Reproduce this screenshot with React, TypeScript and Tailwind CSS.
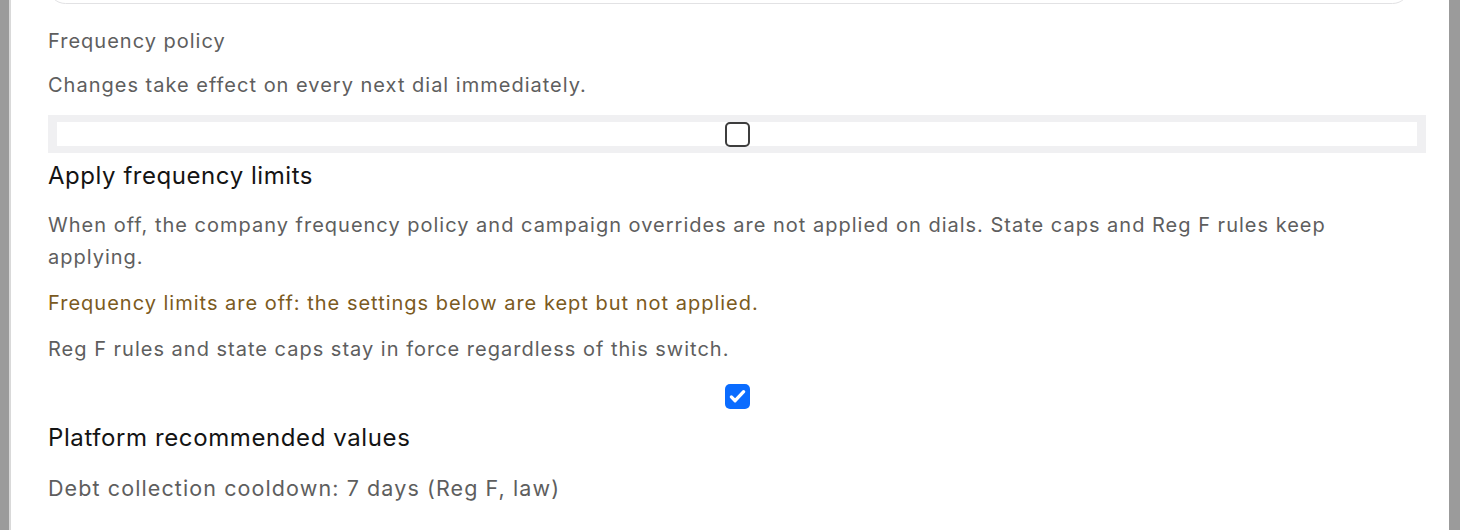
import React from 'react';

const Checkbox: React.FC<{ checked?: boolean }> = ({ checked }) =>
  checked ? (
    <span className="flex h-[25px] w-[25px] items-center justify-center rounded-[5px] bg-[#0a6cff]">
      <svg viewBox="0 0 24 24" className="h-[21px] w-[21px]" fill="none">
        <path d="M5 12.5l4.3 4.3L19 6.5" stroke="#fff" strokeWidth="3.8" strokeLinecap="round" strokeLinejoin="round" />
      </svg>
    </span>
  ) : (
    <span className="block h-[25px] w-[25px] rounded-[5px] border-2 border-[#3d3d3d] bg-white" />
  );

export default function App() {
  return (
    <div className="flex h-[530px] w-full overflow-hidden bg-[#9b9b9b] font-['Inter',sans-serif]">
      <div className="w-[9px] shrink-0 bg-[#9b9b9b]" />
      <div className="w-[2px] shrink-0 bg-[#d9d9d9]" />
      <div className="flex-1 bg-white pl-[37px] pr-[23px]">
        <div className="-mt-[31px] mr-[16px] h-[35px] rounded-[18px] border border-[#e2e2e4]" />

        <p className="mt-[21px] text-[20px] leading-8 tracking-[1px] text-[#5e5e5e]">Frequency policy</p>
        <p className="mt-[12px] text-[20px] leading-8 tracking-[1px] text-[#5e5e5e]">
          Changes take effect on every next dial immediately.
        </p>

        <div className="mt-[14px] flex h-[38px] items-center justify-center border-x-[9px] border-y-[7px] border-[#f0f0f2] bg-white">
          <Checkbox />
        </div>

        <h3 className="mt-[7px] text-[24px] leading-8 tracking-[0.55px] text-[#141414]">Apply frequency limits</h3>
        <p className="mt-[17px] text-[20px] leading-8 tracking-[1px] text-[#5e5e5e]">
          When off, the company frequency policy and campaign overrides are not applied on dials. State caps and Reg F rules keep
          <br />
          applying.
        </p>
        <p className="mt-[14px] text-[20px] leading-8 tracking-[1px] text-[#7b5a21]">
          Frequency limits are off: the settings below are kept but not applied.
        </p>
        <p className="mt-[14px] text-[20px] leading-8 tracking-[1px] text-[#5e5e5e]">
          Reg F rules and state caps stay in force regardless of this switch.
        </p>

        <div className="mt-[19px] flex justify-center">
          <Checkbox checked />
        </div>

        <h3 className="mt-[13px] text-[24px] leading-8 tracking-[0.6px] text-[#141414]">Platform recommended values</h3>
        <p className="mt-[18px] text-[21.5px] leading-8 tracking-[1.1px] text-[#5e5e5e]">
          Debt collection cooldown: 7 days (Reg F, law)
        </p>
      </div>
      <div className="w-[11px] shrink-0 bg-[#9b9b9b]" />
    </div>
  );
}
